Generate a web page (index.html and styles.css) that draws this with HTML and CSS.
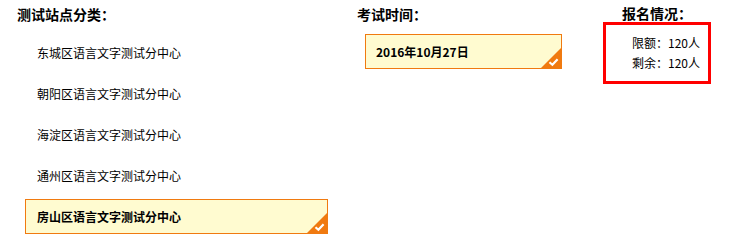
FILE: index.html
```html
<!DOCTYPE html>
<html lang="zh">
<head>
<meta charset="utf-8">
<link rel="stylesheet" href="styles.css">
</head>
<body>
<div class="page">
  <section class="col col-site">
    <h2 class="title">测试站点分类：</h2>
    <ul class="list">
      <li class="opt">东城区语言文字测试分中心</li>
      <li class="opt">朝阳区语言文字测试分中心</li>
      <li class="opt">海淀区语言文字测试分中心</li>
      <li class="opt">通州区语言文字测试分中心</li>
      <li class="opt selected">房山区语言文字测试分中心<svg class="tick" viewBox="0 0 20 20"><polygon points="20,0 20,20 0,20" fill="#f07a10"/><path d="M8.5 14.2 L11.4 16.8 L16.6 11.2" stroke="#fff" stroke-width="2.2" fill="none"/></svg></li>
    </ul>
  </section>
  <section class="col col-time">
    <h2 class="title">考试时间：</h2>
    <div class="opt selected date">2016年10月27日<svg class="tick" viewBox="0 0 20 20"><polygon points="20,0 20,20 0,20" fill="#f07a10"/><path d="M8.5 14.2 L11.4 16.8 L16.6 11.2" stroke="#fff" stroke-width="2.2" fill="none"/></svg></div>
  </section>
  <section class="col col-quota">
    <h2 class="title quota-title">报名情况：</h2>
    <div class="quota">
      <div class="qrow">限额：120人</div>
      <div class="qrow">剩余：120人</div>
    </div>
  </section>
</div>
</body>
</html>
```
FILE: styles.css
```css
html, body {
  margin: 0;
  padding: 0;
  background: #fff;
}
body {
  font-family: "Noto Sans CJK SC", "Liberation Sans", sans-serif;
  font-size: 12px;
  color: #000;
}
.page {
  display: flex;
  padding-left: 17px;
}
.col-site { width: 340px; }
.col-time { width: 246px; }
.col-quota { width: 120px; }
.title {
  margin: 0;
  font-size: 14px;
  font-weight: bold;
  line-height: 28px;
  height: 28px;
  letter-spacing: 0;
}
.list {
  list-style: none;
  margin: 7px 0 0 8px;
  padding: 0;
  display: flex;
  flex-direction: column;
  gap: 6px;
}
.opt {
  position: relative;
  box-sizing: border-box;
  height: 35px;
  line-height: 33px;
  border: 1px solid transparent;
  padding-left: 11px;
  width: 303px;
}
.opt.selected {
  border-color: #f07a10;
  background: #fffbd0;
  font-weight: bold;
}
.tick {
  position: absolute;
  right: 0;
  bottom: 0;
  width: 20px;
  height: 20px;
  display: block;
}
.date {
  margin: 6px 0 0 8px;
  width: 197px;
  height: 35px;
  padding-left: 10px;
}
.quota-title {
  height: 22px;
  line-height: 26px;
  padding-left: 19px;
}
.quota {
  box-sizing: border-box;
  width: 108px;
  height: 62px;
  border: 3px solid #f00;
  padding: 8px 0 0 26px;
}
.qrow {
  line-height: 20px;
  white-space: nowrap;
}
```
